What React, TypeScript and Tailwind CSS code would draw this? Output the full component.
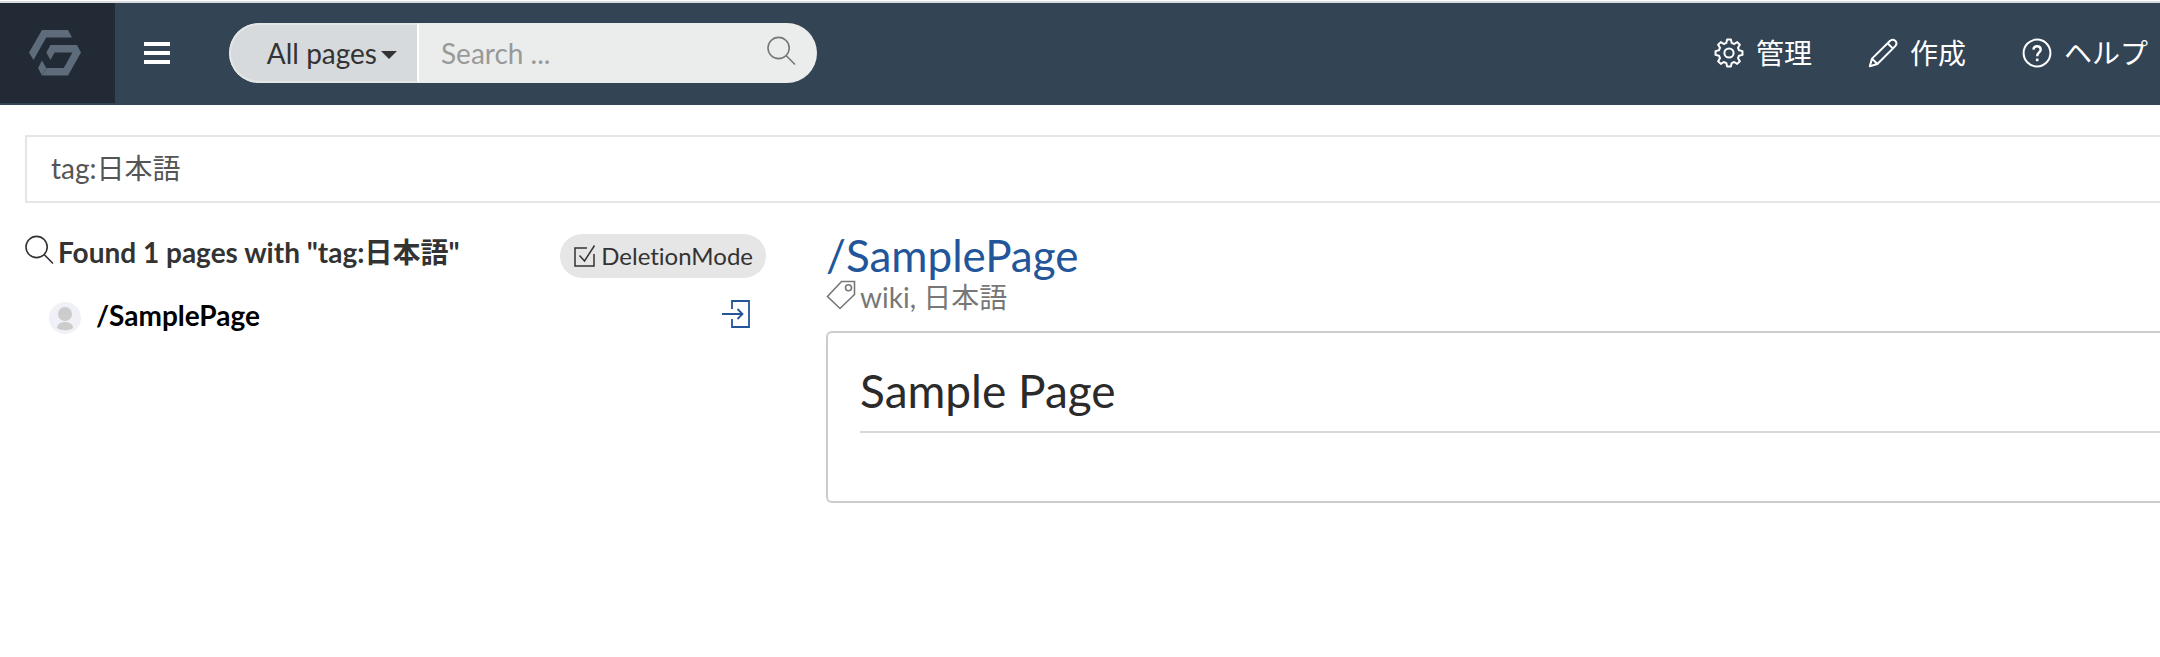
import type { ReactNode } from "react";

type IconProps = { className?: string; children?: ReactNode };

function Icon({ className = "", children }: IconProps) {
  return (
    <svg viewBox="0 0 30 30" fill="none" stroke="currentColor" strokeWidth="1.6" aria-hidden="true" className={`block size-[30px] shrink-0 ${className}`}>
      {children}
    </svg>
  );
}

function Magnifier({ className }: IconProps) {
  return (
    <Icon className={className}>
      <circle cx="11.6" cy="12" r="10.6" />
      <path d="M19.1 19.5 28 28.5" />
    </Icon>
  );
}

function gearPath() {
  const points: string[] = [];
  for (let i = 0; i < 8; i++) {
    const steps: [number, number][] = [[-15, 10.4], [-8, 13.6], [8, 13.6], [15, 10.4]];
    for (const [offset, radius] of steps) {
      const a = ((i * 45 + offset) * Math.PI) / 180;
      points.push(`${(15 + radius * Math.sin(a)).toFixed(2)} ${(15 - radius * Math.cos(a)).toFixed(2)}`);
    }
  }
  return `M${points.join("L")}Z`;
}

function Gear() {
  return (
    <Icon>
      <path d={gearPath()} strokeWidth="2" strokeLinejoin="round" />
      <circle cx="15" cy="15" r="4.6" strokeWidth="2" />
    </Icon>
  );
}

function Pencil() {
  return (
    <Icon>
      <path strokeWidth="2" strokeLinejoin="round" d="M1.8 28.2 4 20.6 21.6 3.2C23.4 1.4 25.6 1.4 27.2 2.8 28.8 4.4 28.8 6.6 27 8.4L9.4 26Z M4 20.6 9.4 26 M19.6 5.2 24.8 10.4" />
    </Icon>
  );
}

function Help() {
  return (
    <Icon>
      <circle cx="15" cy="15" r="13.4" strokeWidth="2" />
      <path strokeWidth="2.4" d="M11.4 11.6C11.6 9.2 13 8.2 15.1 8.2 17.3 8.2 18.7 9.6 18.7 11.5 18.7 14.4 15.2 14.5 15.2 18.2" />
      <path strokeWidth="2.6" d="M15.2 20.6V23.2" />
    </Icon>
  );
}

function Logo() {
  return (
    <svg viewBox="0 0 52 46" className="block h-[46px] w-[52px]" fill="#5d6b7b" aria-hidden="true">
      <path d="M13 0H39L43 7.5H17.2L4.5 30 0 22.5Z" />
      <path d="M21.5 15H48L52 22.5 39 45.5H13L9 38 13 30.5 17.3 38H34.8L43.4 22.5H25.6L21.5 30 17.3 22.5Z" />
      <path d="M17.3 38 13 45.5" stroke="#3d4a58" strokeWidth=".6" />
    </svg>
  );
}

function NavLink({ icon, label }: { icon: ReactNode; label: string }) {
  return (
    <a href="#" className="flex items-center gap-3 whitespace-nowrap">
      {icon}
      <span>{label}</span>
    </a>
  );
}

export default function App() {
  return (
    <div className="min-h-screen overflow-x-hidden bg-white font-[Lato,'Noto_Sans_CJK_JP',sans-serif] text-[28px] leading-10 text-[#333] [font-variant-ligatures:none]">
      <header className="mt-px flex border-t-2 border-b-2 border-t-[#d8dcde] border-b-[#334455] bg-[#334455] text-white">
        <a href="#" aria-label="Home" className="flex h-[100px] w-[115px] items-center bg-[#222b35] pl-[29px]">
          <Logo />
        </a>
        <button type="button" aria-label="Menu" className="ml-[29px] flex flex-col justify-center gap-[5px]">
          <span className="h-1 w-[26px] bg-white" />
          <span className="h-1 w-[26px] bg-white" />
          <span className="h-1 w-[26px] bg-white" />
        </button>
        <form className="ml-[59px] flex h-[60px] w-[588px] self-center overflow-hidden rounded-full bg-[#ebeded]">
          <button type="button" className="flex w-[190px] items-center justify-end gap-1 rounded-l-full border-2 border-[#e4e6e5] border-r-white bg-[#d6dadd] pr-5 text-[#333]">
            All pages
            <svg viewBox="0 0 16 8" className="mt-1 w-4" fill="currentColor" aria-hidden="true"><path d="M0 0H16L8 8Z" /></svg>
          </button>
          <input aria-label="Search" placeholder="Search ..." className="min-w-0 flex-1 bg-transparent pl-[22px] text-[#333] outline-none placeholder:text-[#999]" />
          <button type="submit" aria-label="Submit search" className="pr-5 pb-1 text-[#777]">
            <Magnifier />
          </button>
        </form>
        <nav className="ml-auto flex items-center gap-14 pr-3">
          <NavLink icon={<Gear />} label="管理" />
          <NavLink icon={<Pencil />} label="作成" />
          <NavLink icon={<Help />} label="ヘルプ" />
        </nav>
      </header>

      <main className="pt-[30px] pl-[25px]">
        <input aria-label="Search query" defaultValue="tag:日本語" className="block h-[68px] w-full border-2 border-r-0 border-[#e2e6e9] px-6 pb-1 text-[#555] outline-none" />
        <div className="flex gap-[60px] pt-[30px]">
          <section className="w-[741px] shrink-0">
            <div className="flex items-start justify-between">
              <h2 className="flex items-center gap-[3px] font-bold leading-[38px]">
                <Magnifier className="mb-1" />
                Found 1 pages with "tag:日本語"
              </h2>
              <button type="button" className="mt-px flex h-11 items-center gap-1 rounded-full bg-[#e6e6e6] px-[13px] text-2xl">
                <svg viewBox="0 0 24 24" fill="none" stroke="currentColor" strokeWidth="1.5" className="size-6" aria-hidden="true">
                  <path d="M14 4H2V22H21V10M6.5 11.5 11.5 17 21.5 1.5" />
                </svg>
                DeletionMode
              </button>
            </div>
            <div className="mt-[15px] flex items-center pr-[15px] pl-6">
              <svg viewBox="0 0 32 32" className="mt-2 size-8" aria-hidden="true">
                <circle cx="16" cy="16" r="16" fill="#f0f1f6" />
                <circle cx="16" cy="12" r="7" fill="#ccc" />
                <path d="M8 26C8 18 24 18 24 26 20 29 12 29 8 26Z" fill="#ccc" />
              </svg>
              <a href="#" className="ml-[15px] pt-0.5 font-bold text-black">/SamplePage</a>
              <a href="#preview" aria-label="Open page" className="ml-auto text-[#225599]">
                <Icon>
                  <path d="M11 10V2H28V28H11V20M1 15H21M16.5 10 21.5 15 16.5 20" strokeWidth="1.8" />
                </Icon>
              </a>
            </div>
          </section>
          <article className="min-w-0 flex-1">
            <h1 className="text-[44px] leading-11">
              <a href="#" className="text-[#225599]">/SamplePage</a>
            </h1>
            <p className="flex items-center gap-1 text-[#777]">
              <Icon className="mb-1">
                <path d="M15.5 1.5H28.5V14.5L14 28.5 1.5 16.5Z" />
                <circle cx="22.5" cy="7.8" r="3" />
              </Icon>
              wiki, 日本語
            </p>
            <div className="mt-3.5 rounded-l-md border-2 border-r-0 border-[#ccc] pt-[26px] pb-[68px] pl-8">
              <h2 className="border-b-2 border-[#d8d8d8] pb-2 text-[46px] leading-16 text-[#2b2b2b]">Sample Page</h2>
            </div>
          </article>
        </div>
      </main>
    </div>
  );
}
